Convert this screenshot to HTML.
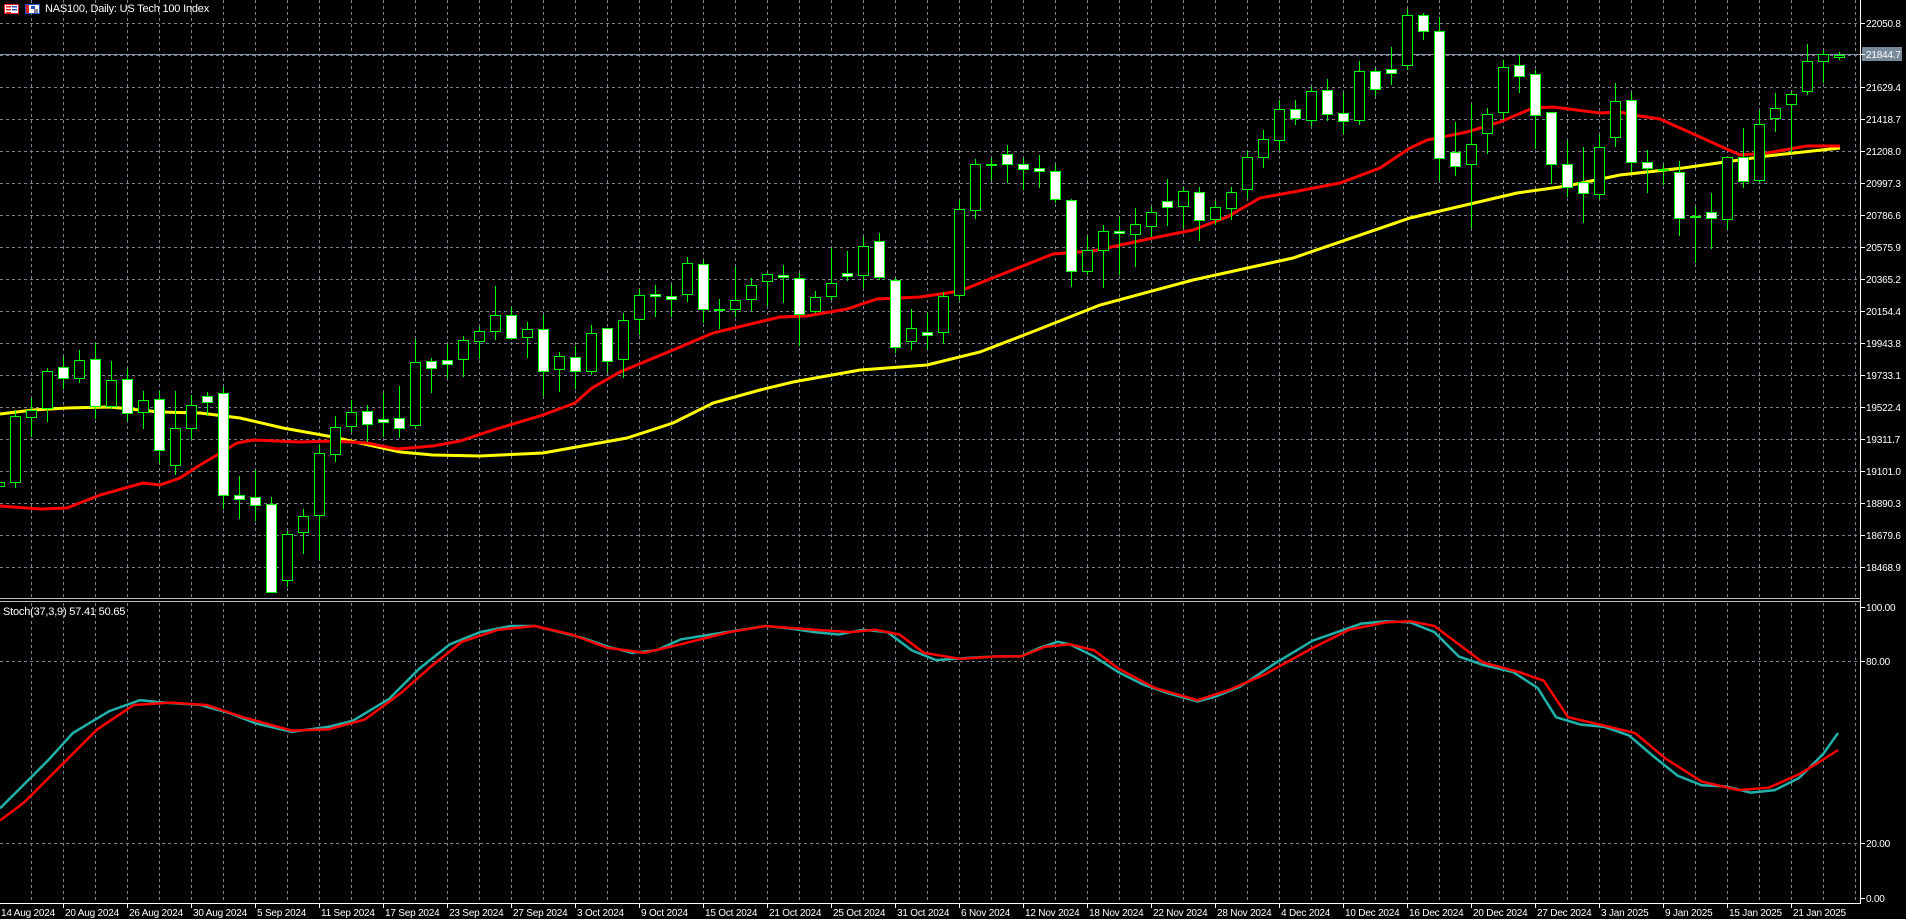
<!DOCTYPE html>
<html><head><meta charset="utf-8"><style>
html,body{margin:0;padding:0;background:#000;width:1906px;height:919px;overflow:hidden}
svg{display:block}
text{font-family:"Liberation Sans",sans-serif;font-size:10px;letter-spacing:-0.2px;fill:#fff}
</style></head><body>
<svg id="s" width="1906" height="919" xmlns="http://www.w3.org/2000/svg">
<rect width="1906" height="919" fill="#000"/>
<g id="grid"></g>
<g id="ma"></g>
<g id="candles"></g>
<g id="st"></g>
<g id="axes"></g>
<rect x="4.5" y="4.5" width="14" height="9" fill="#fff" stroke="#e02020"/>
<rect x="6" y="6" width="5" height="1.5" fill="#e02020"/><rect x="6" y="9" width="5" height="1.5" fill="#e02020"/><rect x="6" y="12" width="5" height="1" fill="#e02020"/>
<rect x="12" y="6" width="5" height="1.5" fill="#2050c0"/><rect x="12" y="9" width="5" height="1.5" fill="#2050c0"/>
<rect x="25.5" y="4.5" width="14" height="9" fill="#fff" stroke="#2050c0"/>
<rect x="26" y="5" width="3" height="8" fill="#e02020"/><rect x="31" y="6" width="4" height="3" fill="#2050c0"/><rect x="34" y="9" width="4" height="4" fill="#889"/>
<text x="45" y="12" style="font-size:11px">NAS100, Daily:  US Tech 100 Index</text>
<text x="3" y="615" style="font-size:11px">Stoch(37,3,9) 57.41 50.65</text>
</svg>
<script>
const NS="http://www.w3.org/2000/svg";
function el(p,t,a){const e=document.createElementNS(NS,t);for(const k in a)e.setAttribute(k,a[k]);document.getElementById(p).appendChild(e);return e;}
const GC="#7a8490";
for(let k=1;k*32<1860;k++){const x=32*k-0.5;
 el("grid","line",{x1:x,y1:0,x2:x,y2:598,stroke:GC,"stroke-dasharray":"3,3"});
 el("grid","line",{x1:x,y1:603,x2:x,y2:903,stroke:GC,"stroke-dasharray":"3,3"});}
for(let k=0;k<18;k++){const y=23+32*k+0.5;el("grid","line",{x1:0,y1:y,x2:1860,y2:y,stroke:GC,"stroke-dasharray":"3,3"});}
[661.5,843.5].forEach(y=>el("grid","line",{x1:0,y1:y,x2:1860,y2:y,stroke:GC,"stroke-dasharray":"3,3"}));
el("grid","line",{x1:0,y1:54.5,x2:1860,y2:54.5,stroke:"#8090a0"});
const red=[[0,506],[40,509],[67,508],[100,495],[143,483],[160,485],[180,478],[200,465],[217,455],[237,443],[253,440],[300,442],[333,441],[367,443],[397,449],[433,446],[460,441],[493,430],[543,415],[575,403],[592,388],[620,372],[673,350],[713,333],[780,317],[807,316],[847,309],[877,299],[920,297],[960,291],[980,283],[1053,254],[1093,251],[1153,238],[1193,230],[1227,217],[1260,198],[1293,192],[1340,183],[1380,168],[1410,148],[1427,140],[1467,132],[1500,122],[1533,108],[1553,107],[1600,113],[1620,112],[1633,115],[1660,119],[1680,128],[1700,137],[1740,155],[1767,153],[1807,146],[1840,146]];
const yel=[[0,414],[33,410],[67,408],[110,407],[160,412],[200,413],[240,418],[283,428],[333,437],[400,452],[433,455],[480,456],[543,453],[627,438],[673,423],[713,403],[760,390],[793,382],[860,370],[927,365],[980,352],[1037,330],[1100,305],[1193,280],[1293,258],[1410,218],[1440,211],[1517,193],[1567,186],[1620,175],[1683,168],[1767,156],[1840,148]];
const pts=a=>a.map(p=>p.join(",")).join(" ");
el("ma","polyline",{points:pts(yel),fill:"none",stroke:"#ffff00","stroke-width":3});
el("ma","polyline",{points:pts(red),fill:"none",stroke:"#ff0000","stroke-width":3});
const C=[[482,486,478,490,0],[416,482,410,488,0],[410,417,398,437,0],[371,408,368,422,0],[367,378,357,389,1],[360,378,350,383,0],[359,406,343,419,1],[380,406,361,409,0],[379,413,369,421,1],[400,412,391,429,0],[399,450,391,463,1],[428,465,391,475,0],[405,428,395,439,0],[396,402,392,416,1],[393,495,387,509,1],[495,499,476,519,1],[497,505,470,521,1],[504,592,497,593,1],[534,580,531,587,0],[516,532,509,554,0],[453,515,445,560,0],[427,454,416,462,0],[412,426,400,432,0],[411,424,405,442,1],[419,422,393,437,1],[418,428,386,438,1],[362,425,339,428,0],[361,368,358,393,1],[360,364,344,378,1],[340,359,336,377,0],[331,341,327,359,0],[315,331,286,340,0],[315,338,307,340,1],[329,337,322,358,0],[329,371,315,396,1],[356,369,352,392,0],[357,371,346,389,1],[333,371,325,375,0],[328,361,328,372,1],[320,359,313,378,0],[295,319,289,335,0],[294,296,285,317,1],[296,299,285,317,1],[263,294,257,302,0],[264,309,260,323,1],[309,309,299,329,0],[300,309,267,317,0],[285,299,278,311,0],[274,281,273,306,0],[275,277,265,303,1],[278,314,273,346,1],[297,311,291,313,0],[283,296,248,300,0],[273,276,251,281,1],[246,275,237,288,0],[241,277,233,280,1],[280,347,278,353,1],[328,341,309,350,0],[332,335,313,349,1],[296,332,292,344,0],[209,295,200,300,0],[164,210,159,219,0],[164,164,158,180,0],[154,164,145,183,1],[164,169,158,190,1],[168,171,155,188,1],[171,199,165,203,1],[200,271,199,287,1],[250,271,236,275,0],[231,250,225,288,0],[231,233,217,275,1],[224,234,208,267,0],[212,226,207,237,0],[201,207,179,226,1],[191,206,187,228,0],[192,220,187,241,1],[207,219,201,225,0],[192,208,187,220,0],[157,189,151,198,0],[139,157,130,168,0],[109,140,100,150,0],[109,118,100,125,1],[91,120,87,126,0],[90,114,79,121,1],[113,121,93,134,1],[71,120,61,125,0],[71,89,68,96,1],[69,73,47,85,1],[15,65,9,70,0],[15,31,13,40,1],[31,158,17,181,1],[152,166,122,176,1],[144,164,104,228,0],[114,133,108,154,0],[67,112,60,120,0],[65,76,55,93,1],[74,115,70,149,1],[112,164,112,184,1],[164,187,141,197,1],[182,193,147,223,1],[147,194,135,199,0],[101,137,83,147,0],[100,162,93,172,1],[162,168,150,193,1],[169,169,165,185,0],[172,218,161,236,1],[216,216,207,263,0],[212,218,193,249,1],[157,219,157,229,0],[157,181,128,188,1],[124,180,110,182,0],[108,118,93,132,0],[94,104,92,153,0],[61,91,44,95,0],[54,61,50,83,0],[55,57,52,60,0]];
C.forEach((c,i)=>{const x=16*i-1;const [t,b,h,l,w]=c;
 el("candles","line",{x1:x+0.5,y1:h,x2:x+0.5,y2:l,stroke:"#00ff00"});
 if(b-t<2){el("candles","rect",{x:x-5,y:t,width:11,height:2,fill:"#00ff00"});}
 else el("candles","rect",{x:x-4.5,y:t+0.5,width:10,height:b-t,fill:w?"#fff":"#000",stroke:"#00ff00"});});
const K=1.2156;
const teal=[[0,665],[20,645],[40,625],[60,603],[90,585],[115,576],[135,578],[165,580],[190,587],[210,595],[240,602],[270,598],[290,593],[320,575],[345,550],[370,530],[395,520],[420,515],[440,515],[460,520],[480,525],[500,532],[520,537],[540,535],[560,526],[585,522],[610,518],[630,515],[650,517],[670,520],[690,522],[710,518],[730,520],[750,535],[770,543],[800,541],[820,540],[840,540],[855,533],[870,528],[880,530],[900,540],[920,553],[940,563],[960,570],[985,577],[1000,573],[1020,565],[1050,545],[1080,527],[1100,520],[1120,513],[1140,511],[1160,512],[1180,520],[1200,540],[1220,547],[1245,553],[1265,566],[1280,590],[1300,596],[1320,598],[1340,605],[1360,622],[1380,638],[1400,646],[1420,647],[1440,652],[1460,650],[1480,640],[1500,620],[1512,603]];
const sred=[[0,675],[20,660],[50,630],[80,600],[110,580],[140,578],[170,580],[200,590],[240,601],[270,600],[300,592],[330,570],[355,548],[380,528],[410,518],[440,515],[470,522],[500,533],[530,537],[560,530],[600,520],[630,515],[670,518],[700,520],[720,518],[740,522],[760,537],[790,542],[820,540],[840,540],[860,532],[880,530],[900,535],[920,550],[950,566],[985,576],[1010,568],[1040,555],[1080,533],[1110,518],[1140,512],[1160,511],[1180,515],[1200,530],[1220,545],[1250,553],[1270,560],[1290,590],[1320,597],[1345,603],[1370,624],[1400,643],[1430,650],[1455,648],[1480,637],[1498,626],[1512,617]];
const sc=a=>a.map(p=>(p[0]*K).toFixed(1)+","+(p[1]*K).toFixed(1)).join(" ");
el("st","polyline",{points:sc(teal),fill:"none",stroke:"#20b2aa","stroke-width":2.5});
el("st","polyline",{points:sc(sred),fill:"none",stroke:"#ff0000","stroke-width":2.5});
el("axes","rect",{x:0,y:598,width:1860,height:5,fill:"#000"});
el("axes","line",{x1:0,y1:598.5,x2:1860,y2:598.5,stroke:"#c0c0c0"});
el("axes","line",{x1:0,y1:601.5,x2:1860,y2:601.5,stroke:"#c0c0c0"});
el("axes","rect",{x:1861,y:0,width:45,height:919,fill:"#000"});
el("axes","rect",{x:0,y:904,width:1906,height:15,fill:"#000"});
el("axes","line",{x1:1860.5,y1:0,x2:1860.5,y2:904,stroke:"#fff"});
el("axes","line",{x1:0,y1:903.5,x2:1861,y2:903.5,stroke:"#fff"});
const pv=["22050.8","21840.1","21629.4","21418.7","21208.0","20997.3","20786.6","20575.9","20365.2","20154.4","19943.8","19733.1","19522.4","19311.7","19101.0","18890.3","18679.6","18468.9"];
pv.forEach((v,k)=>{const y=23+32*k;if(k==1)return;
 el("axes","line",{x1:1861,y1:y+0.5,x2:1865,y2:y+0.5,stroke:"#fff"});
 const t=el("axes","text",{x:1866,y:y+4});t.textContent=v;});
el("axes","rect",{x:1862,y:47,width:40,height:14,fill:"#778899"});
el("axes","line",{x1:1861,y1:54.5,x2:1865,y2:54.5,stroke:"#fff"});
{const t=el("axes","text",{x:1866,y:58});t.textContent="21844.7";}
[["100.00",607],["80.00",661],["20.00",843],["0.00",898]].forEach(a=>{
 el("axes","line",{x1:1861,y1:a[1]+0.5,x2:1865,y2:a[1]+0.5,stroke:"#fff"});
 const t=el("axes","text",{x:1866,y:a[1]+4});t.textContent=a[0];});
const dates=["14 Aug 2024","20 Aug 2024","26 Aug 2024","30 Aug 2024","5 Sep 2024","11 Sep 2024","17 Sep 2024","23 Sep 2024","27 Sep 2024","3 Oct 2024","9 Oct 2024","15 Oct 2024","21 Oct 2024","25 Oct 2024","31 Oct 2024","6 Nov 2024","12 Nov 2024","18 Nov 2024","22 Nov 2024","28 Nov 2024","4 Dec 2024","10 Dec 2024","16 Dec 2024","20 Dec 2024","27 Dec 2024","3 Jan 2025","9 Jan 2025","15 Jan 2025","21 Jan 2025"];
dates.forEach((d,k)=>{const x=64*k;
 if(k>0)el("axes","line",{x1:x-0.5,y1:904,x2:x-0.5,y2:908,stroke:"#fff"});
 const t=el("axes","text",{x:x+1,y:916});t.textContent=d;});
</script>
</body></html>
